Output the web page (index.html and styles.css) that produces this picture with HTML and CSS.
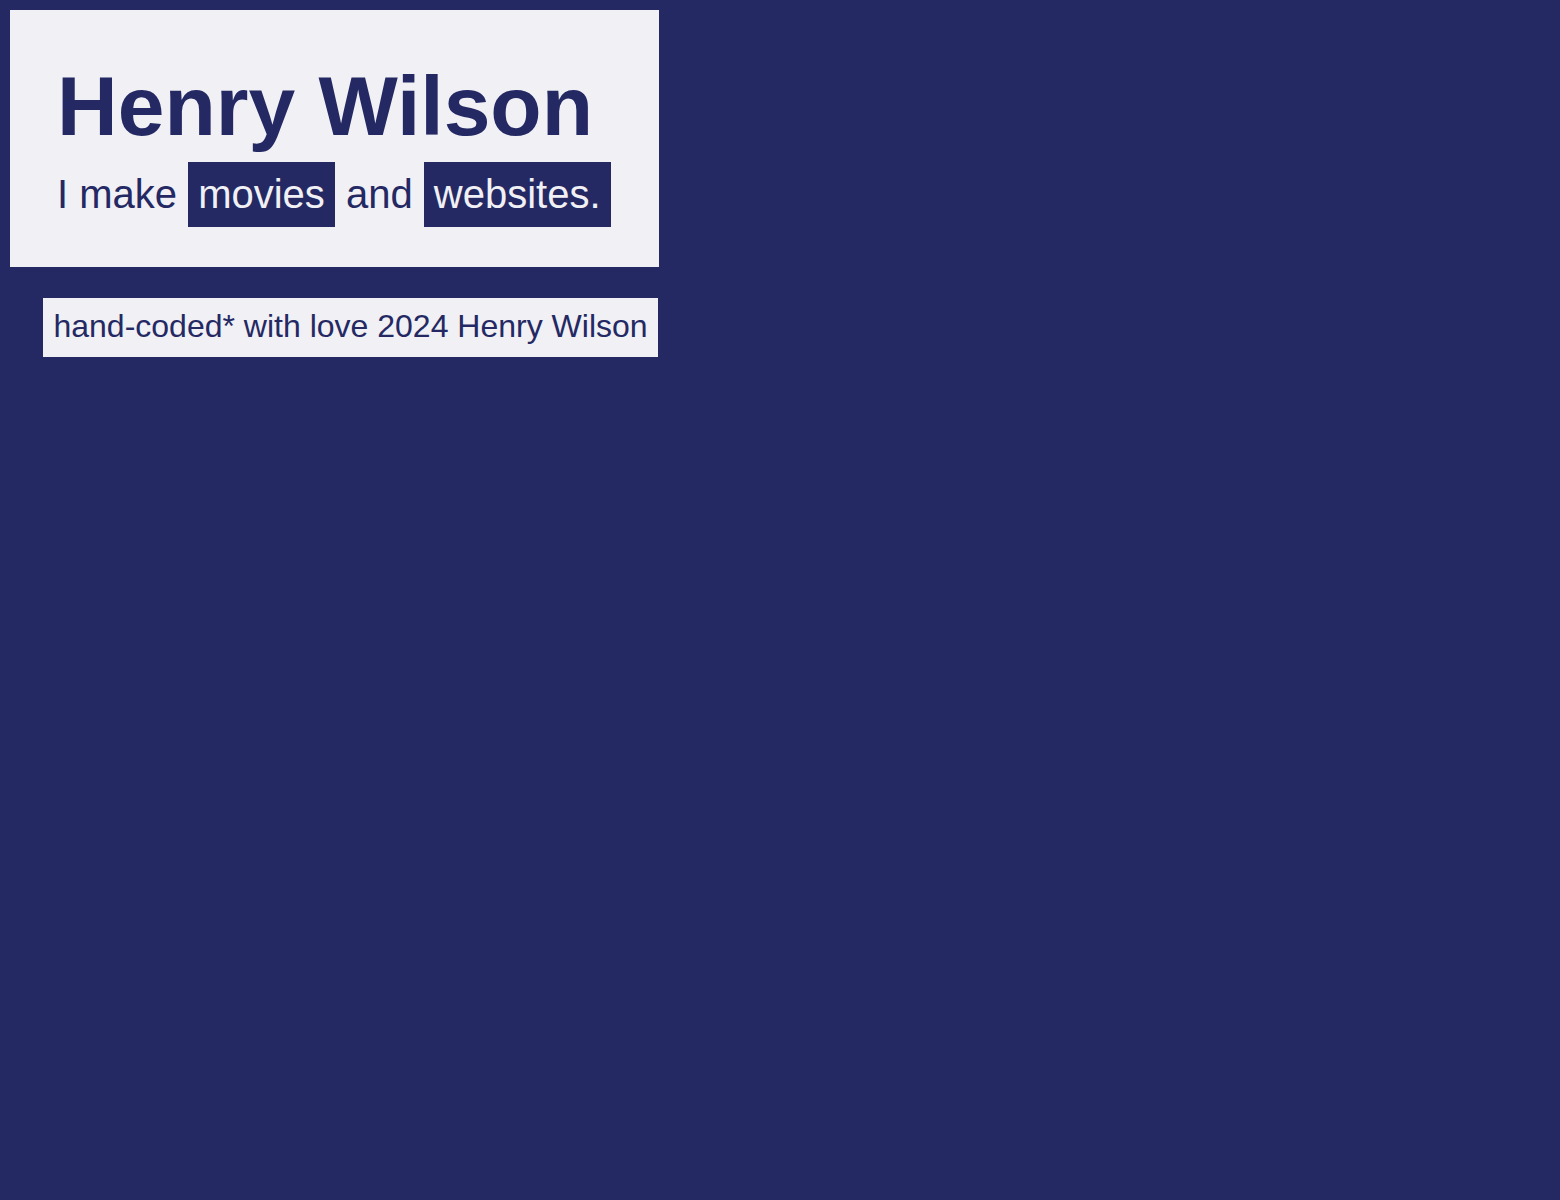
FILE: index.html
```html
<!DOCTYPE html>
<html lang="en">
<head>
<meta charset="utf-8">
<title>Henry Wilson</title>
<link rel="stylesheet" href="styles.css">
</head>
<body>
<div class="page">
  <header class="card">
    <h1 class="name">Henry Wilson</h1>
    <p class="tagline">I make <span class="hl">movies</span> and <span class="hl">websites.</span></p>
  </header>
  <footer class="footer">hand-coded* with love 2024 Henry Wilson</footer>
</div>
</body>
</html>
```

FILE: styles.css
```css
html, body {
  background: #242963;
}
body {
  margin: 10px;
  font-family: "Liberation Sans", Arial, sans-serif;
  color: #242963;
}
.page {
  display: inline-flex;
  flex-direction: column;
  align-items: flex-end;
  gap: 31px;
}
.card {
  background: #f0f0f5;
  padding: 48px 48px 50px 47px;
}
.name {
  margin: 0 0 17px;
  font-size: 84px;
  font-weight: 700;
  line-height: normal;
}
.tagline {
  margin: 0;
  font-size: 40px;
  line-height: normal;
}
.hl {
  background: #242963;
  color: #f0f0f5;
  padding: 10px 10px 11px;
}
.footer {
  background: #f0f0f5;
  font-size: 32px;
  line-height: normal;
  padding: 10px 10px 12px;
  margin-right: 1px;
}
```
